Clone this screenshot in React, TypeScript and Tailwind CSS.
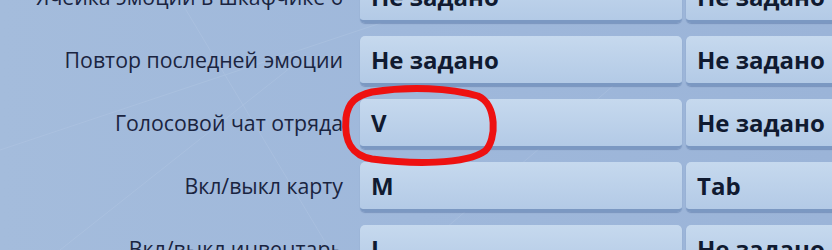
const rows = [
  { label: 'Ячейка эмоции в шкафчике 6', a: 'Не задано', b: 'Не задано' },
  { label: 'Повтор последней эмоции', a: 'Не задано', b: 'Не задано' },
  { label: 'Голосовой чат отряда', a: 'V', b: 'Не задано' },
  { label: 'Вкл/выкл карту', a: 'M', b: 'Tab' },
  { label: 'Вкл/выкл инвентарь', a: 'I', b: 'Не задано' },
];

function KeyButton({ text, wide }: { text: string; wide?: boolean }) {
  return (
    <div
      className={`${wide ? 'w-[322px]' : 'w-[170px]'} h-[50px] shrink-0 rounded-[5px] border-b-[3px] border-[#7b98c2] bg-gradient-to-b from-[#c6d9ee] to-[#b3cae6] shadow-[0_1px_1px_rgba(60,90,140,0.35)] flex items-center pl-[11px] text-[24px] font-bold text-[#101a30]`}
    >
      {text}
    </div>
  );
}

export default function App() {
  return (
    <div className="relative w-[832px] h-[250px] overflow-hidden bg-gradient-to-r from-[#a4bcdc] via-[#9fb8db] to-[#9bb4d8] font-['Open_Sans',sans-serif]">
      {/* faint background streaks */}
      <svg className="absolute inset-0" width="832" height="250">
        <g stroke="#c8d8ee" strokeWidth="1" opacity="0.2">
          <line x1="0" y1="150" x2="420" y2="10" />
          <line x1="180" y1="0" x2="330" y2="250" />
          <line x1="60" y1="250" x2="300" y2="60" />
          <line x1="420" y1="250" x2="620" y2="80" />
        </g>
      </svg>

      <div className="relative flex flex-col gap-[13px] mt-[-27px]">
        {rows.map((r) => (
          <div key={r.label} className="flex items-center">
            <div className="w-[343px] shrink-0 text-right text-[21.3px] text-[#1a2440] leading-none pb-[2px] whitespace-nowrap">
              {r.label}
            </div>
            <div className="ml-[17px] flex gap-[4px]">
              <KeyButton text={r.a} wide />
              <KeyButton text={r.b} />
            </div>
          </div>
        ))}
      </div>

      {/* red hand-drawn mark */}
      <svg className="absolute left-0 top-0 pointer-events-none" width="832" height="250">
        <path
          d="M372 92 C 410 86, 450 88, 478 96 C 497 104, 497 140, 485 151 C 466 165, 410 164, 372 159 C 350 155, 344 140, 346 118 C 348 102, 356 96, 372 92 Z"
          fill="none"
          stroke="#ee1111"
          strokeWidth="7"
          strokeLinecap="round"
        />
      </svg>
    </div>
  );
}
